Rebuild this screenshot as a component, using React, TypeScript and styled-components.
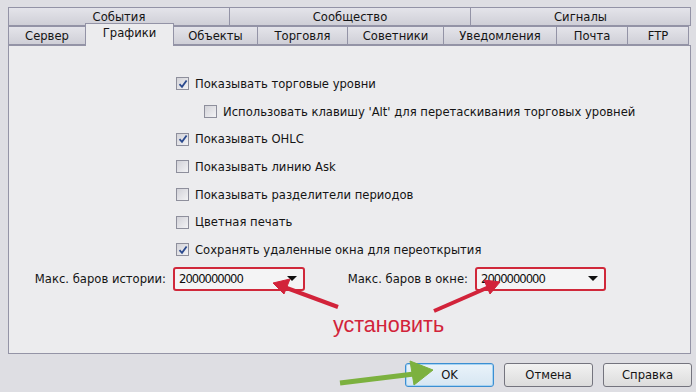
import styled, { createGlobalStyle } from "styled-components";

const GlobalStyle = createGlobalStyle`
  html, body {
    margin: 0;
    padding: 0;
    background: #dedee3;
  }
  * {
    box-sizing: border-box;
  }
`;

const Dialog = styled.div`
  position: relative;
  width: 696px;
  height: 392px;
  padding: 7px 6px 0 8px;
  background: #dedee3;
  font-family: "DejaVu Sans", Verdana, sans-serif;
  font-size: 11.6px;
  color: #141414;
  overflow: hidden;
`;

const TopRow = styled.div`
  display: grid;
  grid-template-columns: 221px 241px 220px;
  height: 19px;
`;

const BottomRow = styled.div`
  display: flex;
  height: 19px;
  align-items: flex-end;
`;

const Tab = styled.div<{ $w?: number; $active?: boolean }>`
  position: relative;
  display: flex;
  align-items: center;
  justify-content: center;
  width: ${(p) => (p.$w ? `${p.$w}px` : "auto")};
  height: ${(p) => (p.$active ? "23px" : "19px")};
  margin-right: -1px;
  margin-bottom: ${(p) => (p.$active ? "-1px" : "0")};
  padding-bottom: ${(p) => (p.$active ? "4px" : "0")};
  border: 1px solid #9393a6;
  border-bottom: ${(p) => (p.$active ? "none" : "1px solid #9393a6")};
  background: ${(p) =>
    p.$active ? "#ececee" : "linear-gradient(#e4e4ea, #cfcfd7)"};
  z-index: ${(p) => (p.$active ? 2 : 1)};
  white-space: nowrap;
`;

const Panel = styled.div`
  position: relative;
  width: 683px;
  height: 309px;
  border: 1px solid #9494a6;
  background: #ececee;
  padding-top: 24px;
`;

const Options = styled.div`
  padding-left: 167px;
`;

const Row = styled.div<{ $indent?: boolean }>`
  display: flex;
  align-items: center;
  height: 27.7px;
  padding-left: ${(p) => (p.$indent ? "28px" : "0")};
  white-space: nowrap;
`;

const Box = styled.span`
  display: inline-flex;
  flex-shrink: 0;
  align-items: center;
  justify-content: center;
  width: 13px;
  height: 13px;
  margin-right: 6px;
  border: 1px solid #8e8f9c;
  background: linear-gradient(135deg, #d2d2d8, #f3f3f5);
`;

const ComboLine = styled.div`
  display: flex;
  align-items: center;
  margin-top: 3px;
  padding-left: 31px;
  height: 24px;
`;

const ComboLabel = styled.span<{ $w: number; $gap?: number }>`
  display: flex;
  justify-content: flex-end;
  flex-shrink: 0;
  width: ${(p) => p.$w}px;
  margin-left: ${(p) => p.$gap ?? 0}px;
  margin-right: 7px;
  white-space: nowrap;
`;

const Combo = styled.div<{ $w: number }>`
  display: flex;
  flex-shrink: 0;
  align-items: center;
  justify-content: space-between;
  width: ${(p) => p.$w}px;
  height: 24px;
  padding: 0 6px 0 4px;
  border: 2px solid #d0283a;
  border-radius: 3px;
  background: #f4f4f5;
  color: #0c0c0c;
  letter-spacing: -1px;
`;

const Caret = styled.span`
  width: 0;
  height: 0;
  border-left: 5px solid transparent;
  border-right: 5px solid transparent;
  border-top: 5px solid #101010;
`;

const Buttons = styled.div`
  display: flex;
  justify-content: flex-end;
  gap: 10px;
  padding-top: 9px;
  margin-right: -2px;
`;

const Button = styled.div<{ $focus?: boolean }>`
  display: flex;
  align-items: center;
  justify-content: center;
  width: 89px;
  height: 24px;
  border: 1px solid ${(p) => (p.$focus ? "#3c8fd2" : "#74747e")};
  border-radius: 3px;
  background: ${(p) =>
    p.$focus
      ? "linear-gradient(#eaf3fa, #d6e6f2)"
      : "linear-gradient(#f2f2f2, #dcdcdc)"};
  box-shadow: ${(p) => (p.$focus ? "inset 0 0 0 1px #a6d3f2" : "none")};
`;

const Hint = styled.div`
  position: absolute;
  left: 333px;
  top: 313px;
  font-size: 21.5px;
  color: #d2233a;
  font-family: "Liberation Sans", Arial, sans-serif;
  z-index: 5;
`;

const Overlay = styled.svg`
  position: absolute;
  left: 0;
  top: 0;
  width: 696px;
  height: 392px;
  pointer-events: none;
  z-index: 6;
`;

const Check = () => (
  <svg width="10" height="10" viewBox="0 0 10 10">
    <path d="M1.5 5.2 L4 7.8 L8.6 1.5" fill="none" stroke="#2b4a8e" strokeWidth="1.8" />
  </svg>
);

const options = [
  { text: "Показывать торговые уровни", on: true },
  { text: "Использовать клавишу 'Alt' для перетаскивания торговых уровней", on: false, indent: true },
  { text: "Показывать OHLC", on: true },
  { text: "Показывать линию Ask", on: false },
  { text: "Показывать разделители периодов", on: false },
  { text: "Цветная печать", on: false },
  { text: "Сохранять удаленные окна для переоткрытия", on: true },
];

const lower = [
  { t: "Сервер", w: 78 },
  { t: "Графики", w: 89, active: true },
  { t: "Объекты", w: 85 },
  { t: "Торговля", w: 91 },
  { t: "Советники", w: 97 },
  { t: "Уведомления", w: 114 },
  { t: "Почта", w: 72 },
  { t: "FTP", w: 62 },
];

const App = () => {
  return (
    <>
      <GlobalStyle />
      <Dialog>
        <TopRow>
          <Tab>События</Tab>
          <Tab>Сообщество</Tab>
          <Tab>Сигналы</Tab>
        </TopRow>
        <BottomRow>
          {lower.map((tab) => (
            <Tab key={tab.t} $w={tab.w} $active={tab.active}>
              {tab.t}
            </Tab>
          ))}
        </BottomRow>
        <Panel>
          <Options>
            {options.map((o) => (
              <Row key={o.text} $indent={o.indent}>
                <Box>{o.on && <Check />}</Box>
                {o.text}
              </Row>
            ))}
          </Options>
          <ComboLine>
            <ComboLabel $w={126}>Макс. баров истории:</ComboLabel>
            <Combo $w={132}>
              2000000000
              <Caret />
            </Combo>
            <ComboLabel $w={116} $gap={47}>Макс. баров в окне:</ComboLabel>
            <Combo $w={131}>
              2000000000
              <Caret />
            </Combo>
          </ComboLine>
        </Panel>
        <Buttons>
          <Button $focus>OK</Button>
          <Button>Отмена</Button>
          <Button>Справка</Button>
        </Buttons>
        <Hint>установить</Hint>
        <Overlay viewBox="0 0 696 392">
          <g fill="#d2233a" stroke="#d2233a">
            <line x1="338" y1="307" x2="284" y2="287" strokeWidth="4" />
            <polygon points="273,283 290,279 284,294" />
            <line x1="434" y1="311" x2="489" y2="287" strokeWidth="4" />
            <polygon points="500,282 484,280 490,294" />
          </g>
          <g fill="#7cb13f" stroke="#7cb13f">
            <line x1="340" y1="383" x2="414" y2="374" strokeWidth="5" />
            <polygon points="433,370 410,361 414,385" />
          </g>
        </Overlay>
      </Dialog>
    </>
  );
};

export default App;
